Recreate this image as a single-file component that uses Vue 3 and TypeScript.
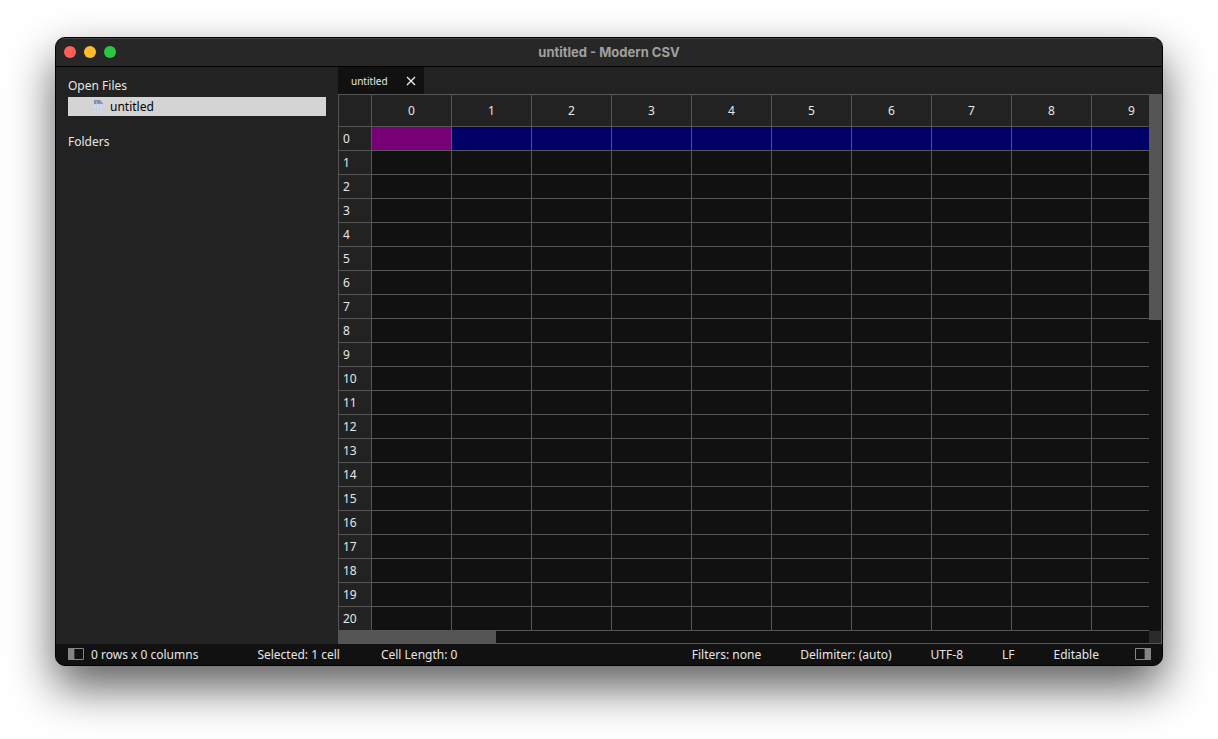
<script setup lang="ts">
import { ref } from 'vue'

const fileName = 'untitled'
const columns: number[] = Array.from({ length: 10 }, (_, i) => i)
const rows: number[] = Array.from({ length: 21 }, (_, i) => i)
const activeRow = ref(0)
const activeColumn = ref(0)

const leftStatus: string[] = ['0 rows x 0 columns', 'Selected: 1 cell', 'Cell Length: 0']
const rightStatus: string[] = ['Filters: none', 'Delimiter: (auto)', 'UTF-8', 'LF', 'Editable']

function select(row: number, column: number): void {
  activeRow.value = row
  activeColumn.value = column
}
</script>

<template>
  <div class="desktop">
    <main class="window">
      <header class="titlebar">
        <div class="lights">
          <button class="light red" type="button" aria-label="Close window"></button>
          <button class="light amber" type="button" aria-label="Minimize window"></button>
          <button class="light green" type="button" aria-label="Zoom window"></button>
        </div>
        <h1 class="title">{{ fileName }} - Modern CSV</h1>
        <div class="lights-balance"></div>
      </header>

      <div class="body">
        <aside class="sidebar">
          <h2 class="heading">Open Files</h2>
          <button class="file" type="button">
            <svg width="12" height="16" viewBox="0 0 12 16" aria-hidden="true">
              <path d="M1 1h7l3 3v11H1z" fill="#d5d9e0" />
              <path d="M1.500 1v13.500h9V4" fill="none" stroke="#c6d5ea" />
              <path d="M2 1h6v4H2z" fill="#8390ad" />
              <path d="M8 1l3 3v1H8z" fill="#8d9bb8" />
              <path d="M4.500 5v9M7.500 5v9M2 5.500h9M2 10.500h9" stroke="#c3d3ea" fill="none" />
              <path d="M4.500 2v3" stroke="#a9b6ce" fill="none" />
            </svg>
            <span>{{ fileName }}</span>
          </button>
          <h2 class="heading folders">Folders</h2>
        </aside>

        <section class="editor">
          <nav class="tabs">
            <div class="tab">
              <button class="tab-name" type="button">{{ fileName }}</button>
              <button class="tab-close" type="button" aria-label="Close tab">
                <svg width="10" height="10" viewBox="0 0 10 10" aria-hidden="true">
                  <path d="M1 1l8 8M9 1L1 9" stroke="#f0f0f0" stroke-width="1.300" fill="none" />
                </svg>
              </button>
            </div>
          </nav>

          <div class="sheet">
            <div class="viewport">
              <table class="grid">
                <thead>
                  <tr>
                    <th class="corner"></th>
                    <th v-for="c in columns" :key="c" class="col-head" scope="col">{{ c }}</th>
                  </tr>
                </thead>
                <tbody>
                  <tr v-for="r in rows" :key="r" :class="{ selected: r === activeRow }">
                    <th class="row-head" scope="row">{{ r }}</th>
                    <td
                      v-for="c in columns"
                      :key="c"
                      :class="{ active: r === activeRow && c === activeColumn }"
                      @click="select(r, c)"
                    ></td>
                  </tr>
                </tbody>
              </table>
            </div>
            <div class="track vertical"><div class="thumb"></div></div>
            <div class="track horizontal"><div class="thumb"></div></div>
            <div class="scroll-corner"></div>
          </div>
        </section>
      </div>

      <footer class="status">
        <button class="panel-toggle" type="button" aria-label="Toggle left panel">
          <svg width="16" height="12" viewBox="0 0 16 12" aria-hidden="true">
            <path d="M.5 .5h15v11H.5z" fill="none" stroke="#858585" />
            <path d="M0 0h6v12H0z" fill="#858585" />
            <path d="M6.500 1v10" stroke="#3c3c3c" />
          </svg>
        </button>
        <div class="group left">
          <span v-for="s in leftStatus" :key="s">{{ s }}</span>
        </div>
        <div class="group right">
          <span v-for="s in rightStatus" :key="s">{{ s }}</span>
        </div>
        <button class="panel-toggle" type="button" aria-label="Toggle right panel">
          <svg width="16" height="12" viewBox="0 0 16 12" aria-hidden="true">
            <path d="M.5 .5h15v11H.5z" fill="none" stroke="#858585" />
            <path d="M10 0h6v12h-6z" fill="#858585" />
            <path d="M9.500 1v10" stroke="#3c3c3c" />
          </svg>
        </button>
      </footer>
    </main>
  </div>
</template>

<style>
body {
  margin: 0;
  background: #fff;
}
</style>

<style scoped>
.desktop {
  box-sizing: border-box;
  min-height: 100vh;
  padding: 37px 55px 73px;
  display: flex;
  overflow: hidden;
  font-family: "Noto Sans", "Open Sans", sans-serif;
  font-size: 12px;
  line-height: 16px;
  color: #e6e6e6;
}

button {
  margin: 0;
  padding: 0;
  border: 0;
  background: none;
  font: inherit;
  color: inherit;
}

.window {
  flex: 1;
  min-width: 0;
  display: flex;
  flex-direction: column;
  border: 1px solid #000;
  border-radius: 10px;
  overflow: hidden;
  background: #222;
  box-shadow: 0 21px 46px rgba(0, 0, 0, 0.64);
}

.titlebar {
  display: flex;
  align-items: center;
  height: 28px;
  padding: 0 8px;
  background: #272727;
  border-bottom: 1px solid #000;
  box-shadow: inset 0 1px #424242;
}

.lights,
.lights-balance {
  display: flex;
  gap: 8px;
  width: 60px;
}

.light {
  width: 12px;
  height: 12px;
  border-radius: 50%;
}

.red {
  background: #ff5f57;
}

.amber {
  background: #febc2e;
}

.green {
  background: #28c840;
}

.title {
  flex: 1;
  margin: 0;
  text-align: center;
  font: 700 13px/16px Inter, sans-serif;
  color: #a0a0a0;
}

.body {
  flex: 1;
  display: flex;
  min-height: 0;
}

.sidebar {
  flex: none;
  box-sizing: border-box;
  width: 282px;
  padding: 11px 12px;
}

.heading {
  margin: 0;
  font-size: 12px;
  font-weight: 400;
  line-height: 16px;
}

.folders {
  margin-top: 18px;
}

.file {
  display: flex;
  align-items: center;
  gap: 6px;
  width: 100%;
  height: 19px;
  margin-top: 3px;
  padding-left: 24px;
  background: #d4d4d4;
  color: #000;
}

.editor {
  flex: 1;
  min-width: 0;
  display: flex;
  flex-direction: column;
}

.tabs {
  display: flex;
  height: 27px;
}

.tab {
  display: flex;
  align-items: center;
  gap: 18px;
  padding: 0 8px 0 13px;
  background: #111;
  font-size: 10px;
}

.tab-close {
  display: flex;
}

.sheet {
  flex: 1;
  min-height: 0;
  display: grid;
  grid-template-columns: minmax(0, 1fr) 12px;
  grid-template-rows: minmax(0, 1fr) 12px;
  border: 1px solid #555;
  background: #111;
}

.viewport {
  overflow: hidden;
}

.grid {
  width: 833px;
  table-layout: fixed;
  border-collapse: separate;
  border-spacing: 0;
}

.grid th,
.grid td {
  box-sizing: border-box;
  width: 80px;
  height: 24px;
  padding: 0;
  border: solid #555;
  border-width: 0 1px 1px 0;
  font-weight: 400;
}

.grid .corner,
.grid .row-head {
  width: 33px;
  background: #222;
}

.grid .corner,
.grid .col-head {
  height: 32px;
  background: #222;
}

.grid .row-head {
  padding-left: 4px;
  text-align: left;
}

.selected td {
  background: #006;
}

.grid td.active {
  background: #707;
}

.track {
  background: #111;
}

.thumb {
  background: #555;
}

.vertical .thumb {
  height: 42%;
}

.horizontal .thumb {
  width: 157px;
  height: 100%;
}

.scroll-corner {
  background: #2b2b2b;
}

.status {
  display: flex;
  align-items: center;
  box-sizing: border-box;
  height: 21px;
  padding: 0 11px 1px 12px;
  background: #111;
}

.panel-toggle {
  display: flex;
}

.group {
  display: flex;
  padding-top: 2px;
  white-space: nowrap;
}

.left {
  gap: 41px;
  margin-left: 7px;
}

.left span:first-child {
  margin-right: 18px;
}

.right {
  gap: 39px;
  margin-left: auto;
  margin-right: 36px;
}
</style>
